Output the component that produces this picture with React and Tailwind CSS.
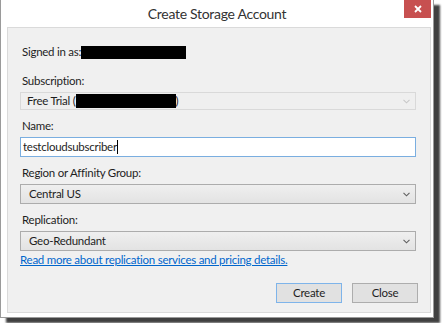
import React from "react"

const font = { fontFamily: "Lato, 'Noto Sans', sans-serif" }
const txt = "text-[11.5px] leading-4 tracking-[-0.26px] text-[#1e1e1e]"

function Chevron({ disabled = false }) {
  return (
    <svg width="7" height="5" viewBox="0 0 7 5" className="shrink-0">
      <polyline points="0.5,0.8 3.5,3.8 6.5,0.8" fill="none" stroke={disabled ? "#c8c8c8" : "#606060"} strokeWidth="1.1" />
    </svg>
  )
}

function Combo({ children, disabled = false, h = "h-[20px]" }) {
  return (
    <div className={`${h} mt-[3px] flex items-center justify-between border pr-[5px] ${disabled ? "border-[#d9d9d9] bg-[#efefef] pl-[6px]" : "border-[#acacac] bg-gradient-to-b from-[#efefef] to-[#e3e3e3] pl-[8px]"}`}>
      <div className={`flex items-center ${txt}`}>{children}</div>
      <Chevron disabled={disabled} />
    </div>
  )
}

function Label({ children, mt = "mt-2" }) {
  return <div className={`${mt} h-4 pl-[2px] ${txt}`}>{children}</div>
}

export default function App() {
  return (
    <div className="w-[442px] h-[323px] bg-white overflow-hidden" style={font}>
      <div className="relative w-[434px] h-[318px] bg-white border-l border-r border-b border-[#9a9a9a] shadow-[6px_5px_2px_rgba(0,0,0,0.75)]">
        {/* title bar */}
        <div className="h-[27px] flex items-center justify-center text-[14px] tracking-[-0.3px] text-[#333]">
          Create Storage Account
        </div>
        <div className="absolute right-[2px] top-0 w-[27px] h-[18px] bg-[#c75050] flex items-center justify-center">
          <svg width="8" height="8" viewBox="0 0 8 8">
            <path d="M1 1 L7 7 M7 1 L1 7" stroke="#fff" strokeWidth="1.8" />
          </svg>
        </div>

        {/* content panel */}
        <div className="ml-[6px] mr-[2px] h-[286px] border border-[#dadada] bg-[#f0f0f0] pt-[16px] pl-[12px] pr-[14px] flex flex-col">
          <div className={`h-4 pl-[2px] flex items-center ${txt}`}>
            Signed in as:
            <span className="inline-block w-[105px] h-[13px] bg-black" />
          </div>

          <Label mt="mt-[13px]">Subscription:</Label>
          <Combo disabled h="h-[18px]">
            Free Trial (
            <span className="inline-block w-[100px] h-[14px] bg-black" />
            )
          </Combo>

          <Label>Name:</Label>
          <div className={`h-[20px] mt-[3px] flex items-center border border-[#7aaee0] bg-white pl-[2px] ${txt}`}>
            testcloudsubscriber
            <span className="inline-block w-px h-[14px] bg-black" />
          </div>

          <Label>Region or Affinity Group:</Label>
          <Combo>Central US</Combo>

          <Label>Replication:</Label>
          <Combo>Geo-Redundant</Combo>

          <a href="#" className="mt-[1px] self-start text-[11.5px] leading-4 tracking-[-0.26px] text-[#0066cc] underline">
            Read more about replication services and pricing details.
          </a>

          <div className="mt-[15px] -mr-[2px] flex justify-end gap-[10px]">
            <button className={`w-[66px] h-[20px] border border-[#7eb4ea] bg-[#e1e1e1] ${txt}`}>
              Create
            </button>
            <button className={`w-[66px] h-[20px] border border-[#adadad] bg-[#e1e1e1] ${txt}`}>
              Close
            </button>
          </div>
        </div>
      </div>
    </div>
  )
}
